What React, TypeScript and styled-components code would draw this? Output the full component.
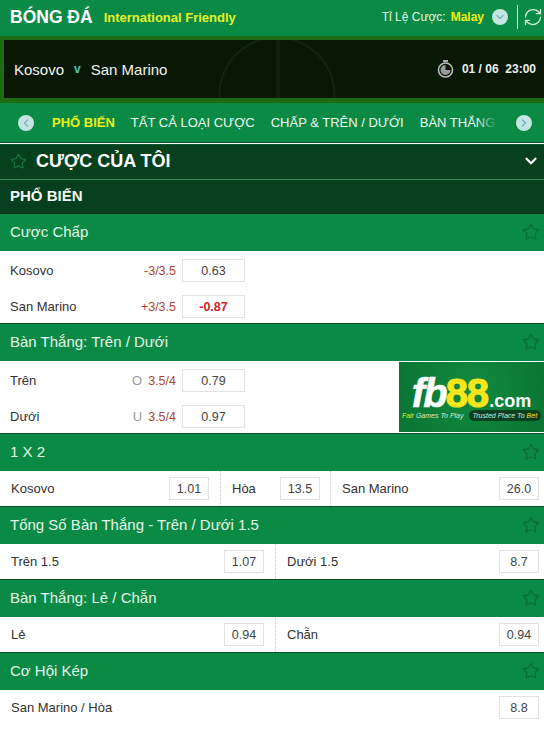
import styled, { createGlobalStyle } from "styled-components";
import { ChevronDown, ChevronLeft, ChevronRight, RefreshCw, Star } from "lucide-react";

const GlobalStyle = createGlobalStyle`
    html, body {
        margin: 0;
        padding: 0;
        background: #fff;
        font-family: "Liberation Sans", Arial, sans-serif;
    }
`

const Page = styled.div`
    width: 544px;
    height: 740px;
    overflow: hidden;
    background: #fff;
`

const TopBar = styled.div`
    height: 36px;
    box-sizing: border-box;
    background: #0b8a45;
    display: flex;
    align-items: center;
    padding: 0 0 2px 10px;
`
const SportTitle = styled.div`
    color: #fff;
    font-size: 17.5px;
    font-weight: bold;
    margin-right: 11px;
`
const League = styled.div`
    color: #e3f02a;
    font-size: 13px;
    font-weight: bold;
    flex: 1;
`
const OddsLabel = styled.span`
    color: #e4f5e4;
    font-size: 12px;
    margin-right: 5px;
`
const OddsValue = styled.span`
    color: #eeee11;
    font-size: 12px;
    font-weight: bold;
    margin-right: 8px;
`
const RoundIcon = styled.span<{ $size: number }>`
    width: ${p => p.$size}px;
    height: ${p => p.$size}px;
    border-radius: 50%;
    background: #c4e6e2;
    color: #7fb2c4;
    display: inline-flex;
    align-items: center;
    justify-content: center;
    flex: none;
`
const Separator = styled.div`
    width: 1px;
    height: 24px;
    background: #dff0e4;
    margin: 0 5px 0 9px;
`
const RefreshBox = styled.div`
    width: 21px;
    color: #d6efe0;
    display: flex;
`

const MatchBar = styled.div`
    height: 58px;
    border-top: 4px solid #1f6a14;
    border-bottom: 5px solid #1f6a14;
    border-left: 4px solid #1f6a14;
    background:
        radial-gradient(circle at 273px 55px, transparent 56px, #0e260a 57px, #0e260a 58px, transparent 59px),
        linear-gradient(to right, transparent 272px, #0d2209 272px, #0d2209 276px, transparent 276px),
        #081804;
    display: flex;
    align-items: center;
    padding: 0 8px 0 10px;
    font-size: 15px;
    color: #f2f2f2;
`
const Versus = styled.span`
    color: #5cc1b0;
    font-size: 12px;
    font-weight: bold;
    margin: 0 10px;
`
const Teams = styled.div`
    flex: 1;
    display: flex;
    align-items: center;
`
const Kickoff = styled.div`
    display: flex;
    align-items: center;
    font-size: 12px;
    font-weight: bold;
    color: #ededed;
`
const ClockIcon = styled.svg`
    width: 17px;
    height: 18px;
    margin-right: 8px;
`

const TabsBar = styled.div`
    height: 40px;
    background: #0b8a45;
    display: flex;
    align-items: center;
    padding: 0 12px 0 18px;
    border-bottom: 1px solid #0a4f28;
    box-sizing: border-box;
`
const TabsScroller = styled.div`
    flex: 1;
    margin: 0 18px 0 18px;
    display: flex;
    gap: 16px;
    overflow: hidden;
    white-space: nowrap;
    position: relative;
`
const Tab = styled.span<{ $active?: boolean }>`
    font-size: 13px;
    color: ${p => (p.$active ? "#eaf01c" : "#eef8f0")};
    font-weight: ${p => (p.$active ? "bold" : "normal")};
`
const TabsFade = styled.span`
    position: absolute;
    right: 0;
    top: 0;
    bottom: 0;
    width: 22px;
    background: linear-gradient(to right, rgba(11, 138, 69, 0), #0b8a45);
`

const MyBets = styled.div`
    margin-top: 1px;
    height: 35px;
    box-sizing: border-box;
    border-top: 1px solid #0a5a2d;
    background: #06401c;
    display: flex;
    align-items: center;
    padding: 0 4px 2px 10px;
`
const MyBetsTitle = styled.div`
    flex: 1;
    margin-left: 9px;
    color: #fff;
    font-size: 18px;
    font-weight: bold;
`
const PopularBar = styled.div`
    height: 35px;
    box-sizing: border-box;
    border-top: 1px solid #3f8a55;
    border-bottom: 1px solid #04331a;
    background: #063f1d;
    display: flex;
    align-items: center;
    padding: 0 0 2px 10px;
    color: #f4f8f4;
    font-size: 15px;
    font-weight: bold;
`

const MarketHeader = styled.div`
    height: 37px;
    box-sizing: border-box;
    background: #0b8a45;
    display: flex;
    align-items: center;
    justify-content: space-between;
    padding: 0 4px 2px 10px;
    color: #e4f7e8;
    font-size: 15px;
`
const MarketBody = styled.div`
    background: #fff;
    border-bottom: 1px solid #0a4f28;
`
const SplitBody = styled(MarketBody)`
    display: flex;
`
const Rows = styled.div`
    width: 399px;
    flex: none;
`
const HandicapRow = styled.div`
    height: 36px;
    box-sizing: border-box;
    padding: 3px 0 0 10px;
    display: flex;
    align-items: center;
    color: #333;
    font-size: 13px;
`
const RowName = styled.span`
    flex: 1;
`
const Letter = styled.span`
    color: #999;
    margin-right: 6px;
`
const Line = styled.span`
    color: #b0452f;
    font-size: 12.5px;
    margin-right: 6px;
`
const OddsBox = styled.span<{ $width: number; $negative?: boolean }>`
    width: ${p => p.$width}px;
    height: 23px;
    box-sizing: border-box;
    border: 1px solid #e2e2e2;
    display: inline-flex;
    align-items: center;
    justify-content: center;
    color: ${p => (p.$negative ? "#d2232f" : "#444")};
    font-weight: ${p => (p.$negative ? "bold" : "normal")};
    font-size: 12.5px;
    background: #fff;
    flex: none;
`
const HandicapOdds = styled(OddsBox)`
    margin-right: 154px;
`
const FullRowSpacer = styled.span`
    width: 145px;
    flex: none;
`
const Banner = styled.div`
    width: 145px;
    height: 70px;
    margin-top: 1px;
    background: radial-gradient(circle at 50% 40%, #118a3e 0, #0a7434 100%);
    display: flex;
    flex-direction: column;
    align-items: center;
    justify-content: center;
`
const BrandLine = styled.div`
    display: flex;
    align-items: baseline;
    height: 30px;
    line-height: 30px;
    font-weight: bold;
    margin-top: 4px;
`
const BrandFb = styled.span`
    display: inline-block;
    height: 30px;
    color: #fff;
    font-size: 40px;
    font-style: italic;
    letter-spacing: -2px;
    -webkit-text-stroke: 0.6px #fff;
`
const BrandEight = styled.span`
    display: inline-block;
    height: 30px;
    color: #f6e71d;
    font-size: 40px;
    letter-spacing: -1px;
    -webkit-text-stroke: 1px #f6e71d;
    margin-right: 1px;
`
const BrandCom = styled.span`
    color: #fff;
    font-size: 18px;
`
const Tagline = styled.div`
    display: flex;
    align-items: center;
    margin-top: 2px;
    font-size: 7px;
    font-style: italic;
    color: #d8ecd8;
    gap: 5px;
`
const Highlight = styled.span`
    color: #f6e71d;
`
const TaglinePill = styled.span`
    background: #0b3f20;
    border-radius: 6px;
    padding: 2px 4px;
`

const PriceRow = styled.div<{ $cols: string }>`
    height: 35px;
    display: grid;
    grid-template-columns: ${p => p.$cols};
    color: #333;
    font-size: 13px;
`
const PriceCell = styled.div`
    display: flex;
    align-items: center;
    justify-content: space-between;
    padding: 0 11px 0 11px;
    & + & {
        border-left: 1px dotted #c9c9c9;
        padding-right: 10px;
    }
    &:last-child {
        padding-right: 5px;
    }
`

const HeaderStar = () => <Star size={18} strokeWidth={1.5} color="#0a6a35" />

const twoWay = "275px 269px"

export default function App() {
    return (
        <Page>
            <GlobalStyle />
            <TopBar>
                <SportTitle>BÓNG ĐÁ</SportTitle>
                <League>International Friendly</League>
                <OddsLabel>Tỉ Lệ Cược:</OddsLabel>
                <OddsValue>Malay</OddsValue>
                <RoundIcon $size={16}><ChevronDown size={12} strokeWidth={3} /></RoundIcon>
                <Separator />
                <RefreshBox><RefreshCw size={20} strokeWidth={1.5} /></RefreshBox>
            </TopBar>

            <MatchBar>
                <Teams>
                    Kosovo<Versus>v</Versus>San Marino
                </Teams>
                <Kickoff>
                    <ClockIcon viewBox="0 0 17 18">
                        <rect x="6" y="0" width="5" height="2" fill="#aaa" />
                        <circle cx="8.5" cy="10" r="7" fill="none" stroke="#bbb" strokeWidth="1.6" />
                        <path d="M8.5 10V5A5 5 0 1 0 13.5 10Z" fill="#999" />
                    </ClockIcon>
                    01 / 06&nbsp;&nbsp;23:00
                </Kickoff>
            </MatchBar>

            <TabsBar>
                <RoundIcon $size={16}><ChevronLeft size={12} strokeWidth={3} /></RoundIcon>
                <TabsScroller>
                    <Tab $active>PHỔ BIẾN</Tab>
                    <Tab>TẤT CẢ LOẠI CƯỢC</Tab>
                    <Tab>CHẤP &amp; TRÊN / DƯỚI</Tab>
                    <Tab>BÀN THẮNG</Tab>
                    <TabsFade />
                </TabsScroller>
                <RoundIcon $size={16}><ChevronRight size={12} strokeWidth={3} /></RoundIcon>
            </TabsBar>

            <MyBets>
                <Star size={17} strokeWidth={1.5} color="#1a7a40" />
                <MyBetsTitle>CƯỢC CỦA TÔI</MyBetsTitle>
                <ChevronDown size={18} strokeWidth={3} color="#fff" />
            </MyBets>
            <PopularBar>PHỔ BIẾN</PopularBar>

            <MarketHeader>Cược Chấp<HeaderStar /></MarketHeader>
            <MarketBody>
                <HandicapRow>
                    <RowName>Kosovo</RowName>
                    <Line>-3/3.5</Line>
                    <HandicapOdds $width={63}>0.63</HandicapOdds>
                    <FullRowSpacer />
                </HandicapRow>
                <HandicapRow>
                    <RowName>San Marino</RowName>
                    <Line>+3/3.5</Line>
                    <HandicapOdds $width={63} $negative>-0.87</HandicapOdds>
                    <FullRowSpacer />
                </HandicapRow>
            </MarketBody>

            <MarketHeader>Bàn Thắng: Trên / Dưới<HeaderStar /></MarketHeader>
            <SplitBody>
                <Rows>
                    <HandicapRow>
                        <RowName>Trên</RowName>
                        <Letter>O</Letter>
                        <Line>3.5/4</Line>
                        <HandicapOdds $width={63}>0.79</HandicapOdds>
                    </HandicapRow>
                    <HandicapRow>
                        <RowName>Dưới</RowName>
                        <Letter>U</Letter>
                        <Line>3.5/4</Line>
                        <HandicapOdds $width={63}>0.97</HandicapOdds>
                    </HandicapRow>
                </Rows>
                <Banner>
                    <BrandLine>
                        <BrandFb>fb</BrandFb>
                        <BrandEight>88</BrandEight>
                        <BrandCom>.com</BrandCom>
                    </BrandLine>
                    <Tagline>
                        <span><Highlight>Fair</Highlight> Games To Play</span>
                        <TaglinePill>Trusted Place To <Highlight>Bet</Highlight></TaglinePill>
                    </Tagline>
                </Banner>
            </SplitBody>

            <MarketHeader>1 X 2<HeaderStar /></MarketHeader>
            <MarketBody>
                <PriceRow $cols="220px 110px 214px">
                    <PriceCell>Kosovo<OddsBox $width={40}>1.01</OddsBox></PriceCell>
                    <PriceCell>Hòa<OddsBox $width={40}>13.5</OddsBox></PriceCell>
                    <PriceCell>San Marino<OddsBox $width={40}>26.0</OddsBox></PriceCell>
                </PriceRow>
            </MarketBody>

            <MarketHeader>Tổng Số Bàn Thắng - Trên / Dưới 1.5<HeaderStar /></MarketHeader>
            <MarketBody>
                <PriceRow $cols={twoWay}>
                    <PriceCell>Trên 1.5<OddsBox $width={40}>1.07</OddsBox></PriceCell>
                    <PriceCell>Dưới 1.5<OddsBox $width={40}>8.7</OddsBox></PriceCell>
                </PriceRow>
            </MarketBody>

            <MarketHeader>Bàn Thắng: Lẻ / Chẵn<HeaderStar /></MarketHeader>
            <MarketBody>
                <PriceRow $cols={twoWay}>
                    <PriceCell>Lẻ<OddsBox $width={40}>0.94</OddsBox></PriceCell>
                    <PriceCell>Chẵn<OddsBox $width={40}>0.94</OddsBox></PriceCell>
                </PriceRow>
            </MarketBody>

            <MarketHeader>Cơ Hội Kép<HeaderStar /></MarketHeader>
            <PriceRow $cols="544px">
                <PriceCell>San Marino / Hòa<OddsBox $width={40}>8.8</OddsBox></PriceCell>
            </PriceRow>
        </Page>
    )
}
